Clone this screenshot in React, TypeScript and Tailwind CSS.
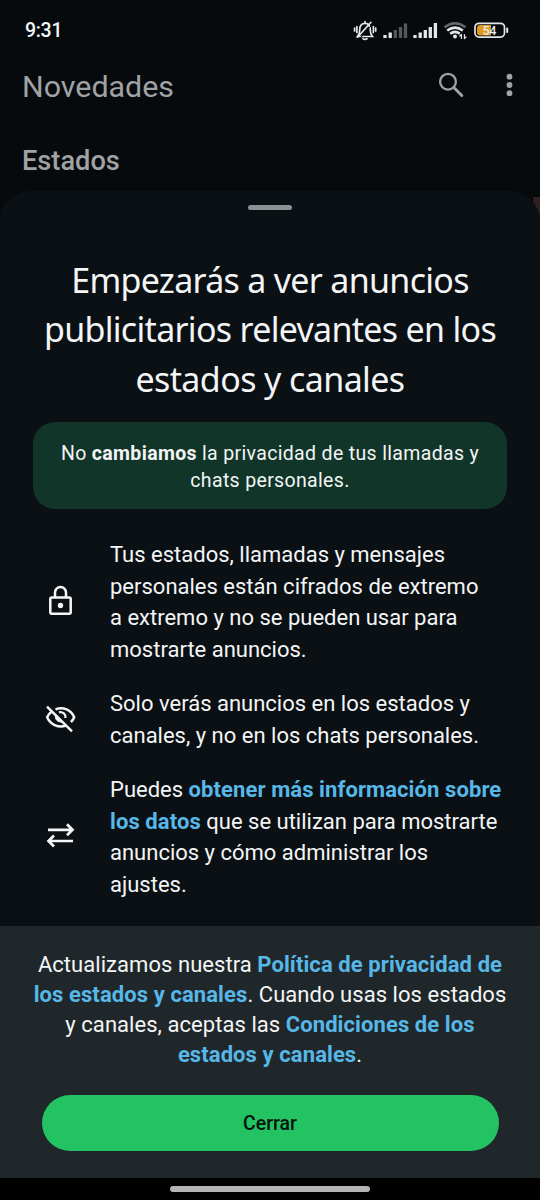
import React from "react";

function StatusIcons() {
  return (
    <svg width="160" height="24" viewBox="350 18 160 24" fill="none" stroke="#e4e6e8" strokeWidth="1.7" strokeLinecap="round">
      <path d="M357.5 36.5h15c-2-2-2.200-3.500-2.200-6.500 0-4-2-6.700-5.300-6.700s-5.300 2.700-5.300 6.700c0 3-.2 4.500-2.200 6.500zM365 21.500v1M363 38.700q2 1.300 4 0M357.500 37.200L371 22.300M356.900 26.500v6M354.600 28v3M373.400 26.500v6M375.700 28v3" />
      <path d="M359 39.200L373 23.700" stroke="#070b0e" strokeWidth="1" />
      <g strokeWidth="3.300" strokeLinecap="butt">
        <path d="M385 35V38M390.200 32.500V38" />
        <path d="M395.300 30V38M400.500 27V38M405.500 23.500V38" stroke="#54585b" />
        <path d="M415 35V38M420.200 32.500V38M425.300 30V38M430.300 27V38M435.400 23V38" />
      </g>
      <g strokeWidth="2.500" strokeLinecap="butt">
        <path d="M444.500 27.200q10.500-8 21 0" stroke="#65696c" />
        <path d="M447.200 30.600q7.800-6 15.600 0M450.200 33.700q4.800-3.700 9.600 0" />
      </g>
      <circle cx="455" cy="36.600" r="2" fill="#e4e6e8" stroke="none" />
      <path d="M461.400 38.500v-4M459.800 36l1.600-1.600M464.400 34.500v4M466 37l-1.600 1.600" strokeWidth="1.200" />
      <rect x="475" y="23.300" width="29.500" height="13.800" rx="4" strokeWidth="1.700" />
      <path d="M480 25h11v10.400h-11a3 3 0 0 1-3-3V28a3 3 0 0 1 3-3z" fill="#dd9b23" stroke="none" />
      <path d="M507.200 28.500v3.500" strokeWidth="2" />
      <text x="489.500" y="34.600" textAnchor="middle" fill="#eef0f1" stroke="none" fontSize="12" fontWeight="500" fontFamily="Roboto, sans-serif">54</text>
    </svg>
  );
}

function LockIcon() {
  return (
    <svg width="60" height="60" viewBox="30 570 60 60" fill="none" stroke="#f4f6f7" strokeWidth="2.500">
      <rect x="50.300" y="596.600" width="20.400" height="16.200" rx="1.500" />
      <path d="M55 596v-4.500a5.500 5.500 0 0 1 11 0v4.500" />
      <circle cx="60.500" cy="604.500" r="2.700" fill="#f4f6f7" stroke="none" />
    </svg>
  );
}

function HiddenEyeIcon() {
  return (
    <svg width="60" height="60" viewBox="30 690 60 60" fill="none" stroke="#f4f6f7" strokeWidth="2.500">
      <path d="M55.500 709.300c8-3 15.500.8 18.700 7.900q-1.100 2.700-3.300 4.800M51.700 711.400q-2.900 2.200-4.600 5.800c3.700 8 11.700 11 19 8.300" />
      <path d="M59 712.200c4-.7 6.900 2 6.500 5.800" strokeWidth="2.200" />
      <path d="M55.700 714.300c-1.600 4.800 2.200 8.700 6.800 7.500z" fill="#f4f6f7" strokeWidth="1" />
      <path d="M47 706.700L72 731.300" />
    </svg>
  );
}

function SwapIcon() {
  return (
    <svg width="60" height="60" viewBox="30 805 60 60" fill="none" stroke="#f4f6f7" strokeWidth="2.700">
      <path d="M48 829.800h23.500M67 824.300l5.500 5.500-5.500 5.500M73 841h-23.500M54 835.500l-5.500 5.500 5.500 5.500" />
    </svg>
  );
}

function Line({ children, className = "" }: { children: React.ReactNode; className?: string }) {
  return <span className={`block whitespace-nowrap ${className}`}>{children}</span>;
}

function Link({ children }: { children: React.ReactNode }) {
  return <a className="font-bold tracking-[0.09px] text-[#57b8e8]">{children}</a>;
}

export default function App() {
  return (
    <div className="flex h-[1200px] w-[540px] flex-col overflow-hidden bg-[#060a0d] font-['Roboto',sans-serif] text-[#f3f5f6]">
      <div className="flex h-[60px] shrink-0 items-start justify-between pt-[18px] pr-[30px] pl-[25px]">
        <span className="pt-px text-[19.5px] leading-6 font-medium tracking-[-0.3px]">9:31</span>
        <StatusIcons />
      </div>
      <header className="flex h-[54px] shrink-0 items-center justify-between pr-[24px] pl-[22px] text-[#a0a2a4]">
        <h1 className="text-[30.4px] leading-[54px]">Novedades</h1>
        <svg className="mb-[4px]" width="80" height="32" viewBox="436 69 80 32" fill="none" stroke="#a0a2a4">
          <circle cx="448" cy="81.700" r="7.900" strokeWidth="2.300" />
          <path d="M453.800 87.500l8 8" strokeWidth="2.900" strokeLinecap="round" />
          <g fill="#a0a2a4" stroke="none">
            <circle cx="509.500" cy="76.700" r="2.900" />
            <circle cx="509.500" cy="85" r="2.900" />
            <circle cx="509.500" cy="93.200" r="2.900" />
          </g>
        </svg>
      </header>
      <h2 className="h-[77px] shrink-0 pt-[31px] pl-[22px] text-[27.2px] leading-8 font-medium text-[#a0a2a4]">Estados</h2>
      <div className="flex h-[987px] shrink-0 flex-col bg-[linear-gradient(#30201f,#30201f)] bg-size-[7px_24px] bg-position-[533px_6px] bg-no-repeat">
        <section className="flex h-[735px] shrink-0 flex-col items-center rounded-t-[30px] bg-[#0b1014]">
          <div className="mt-[14px] h-[5px] w-11 shrink-0 rounded-full bg-[#8b9093]" />
          <h3 className="mt-[45.5px] text-center font-['Noto_Sans',sans-serif] text-[34px] leading-[49.5px] tracking-[-0.7px]">
            <Line>Empezarás a ver anuncios</Line>
            <Line>publicitarios relevantes en los</Line>
            <Line className="tracking-[-0.6px]">estados y canales</Line>
          </h3>
          <div className="mt-[18px] flex h-[87px] w-[474px] shrink-0 flex-col justify-center rounded-[22px] bg-[#123529] pt-[3px] text-center text-[19.5px] leading-[27.5px] tracking-[0.34px]">
            <Line>No <b>cambiamos</b> la privacidad de tus llamadas y</Line>
            <Line>chats personales.</Line>
          </div>
          <div className="mt-[30px] flex w-full flex-col gap-[23px] pl-[30px] text-[22px] leading-[31.5px]">
            <div className="flex h-[126px] items-center gap-5">
              <div className="-mt-[3px]"><LockIcon /></div>
              <p><Line>Tus estados, llamadas y mensajes</Line><Line>personales están cifrados de extremo</Line><Line>a extremo y no se pueden usar para</Line><Line>mostrarte anuncios.</Line></p>
            </div>
            <div className="flex h-[63px] items-center gap-5">
              <HiddenEyeIcon />
              <p><Line>Solo verás anuncios en los estados y</Line><Line>canales, y no en los chats personales.</Line></p>
            </div>
            <div className="flex h-[126px] items-center gap-5">
              <div className="-mt-[5px]"><SwapIcon /></div>
              <p><Line>Puedes <Link>obtener más información sobre</Link></Line><Line><Link>los datos</Link> que se utilizan para mostrarte</Line><Line>anuncios y cómo administrar los</Line><Line>ajustes.</Line></p>
            </div>
          </div>
        </section>
        <footer className="flex h-[252px] shrink-0 flex-col items-center bg-[#20272b] pt-[24px]">
          <p className="text-center text-[22px] leading-[30px] tracking-[0.05px]">
            <Line>Actualizamos nuestra <Link>Política de privacidad de</Link></Line>
            <Line><Link>los estados y canales</Link>. Cuando usas los estados</Line>
            <Line>y canales, aceptas las <Link>Condiciones de los</Link></Line>
            <Line><Link>estados y canales</Link>.</Line>
          </p>
          <button className="mt-[25px] h-[55.5px] w-[457px] shrink-0 rounded-full bg-[#23c263] pt-px text-[19.5px] font-medium text-[#07130c]">Cerrar</button>
        </footer>
      </div>
      <div className="flex h-[22px] shrink-0 justify-center bg-black pt-2">
        <div className="h-[6px] w-[200px] rounded-full bg-[#b5b5b5]" />
      </div>
    </div>
  );
}
